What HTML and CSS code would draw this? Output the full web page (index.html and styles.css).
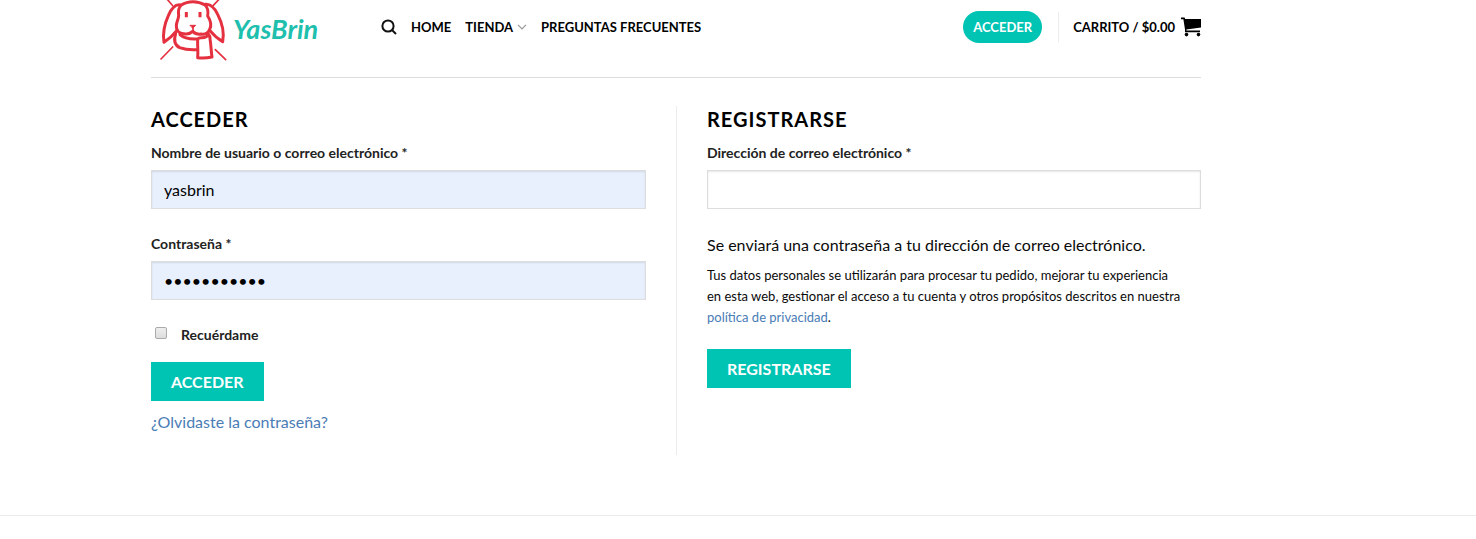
FILE: index.html
```
<!DOCTYPE html>
<html lang="es">
<head>
  <meta charset="UTF-8">
  <meta name="viewport" content="width=device-width, initial-scale=1.0">
  <title>Mi cuenta - YasBrin</title>
  <link rel="stylesheet" href="styles.css">
</head>
<body>
  <!-- Header -->
  <header class="site-header container">
    <a href="#" class="logo" aria-label="YasBrin">
      <svg class="logo-rabbit" viewBox="39 0 210 186" fill="none" stroke="#e5303f" stroke-width="9" stroke-linecap="round" stroke-linejoin="round">
        <path d="M66 -3L82 16M223 -3L205 16M48 177L83 141M242 179L211 149" stroke-width="5"/>
        <path d="M109 15Q124 5 144 5T180 15C190 24 190 36 188 48C196 60 200 76 194 88C189 100 178 104 168 102C157 104 148 99 143 94C136 101 127 103 117 101C101 101 93 91 94 76C95 64 100 59 101 47C99 34 99 24 109 15Z"/>
        <path d="M107 15C91 12 78 28 70 47C59 71 52 96 57 127Q80 111 96 91"/>
        <path d="M180 13C198 11 210 26 218 43C231 68 239 95 233 125Q212 113 195 92"/>
        <path d="M92 101C86 120 90 136 104 143Q126 151 157 149M105 104Q121 119 157 117M188 102Q196 107 195 116C198 132 198 152 201 171Q180 175 158 173C160 154 157 137 158 121Q158 112 171 113Q186 113 191 103"/>
        <path d="M124 36V52M165 36V52" stroke-linecap="butt"/>
        <path d="M136 76H152L144 84Z" fill="#e5303f" stroke-width="3"/>
        <path d="M144 83V94" stroke-width="5"/>
      </svg>
      <span class="logo-text">YasBrin</span>
    </a>

    <nav class="main-nav">
      <a href="#" class="search-link" aria-label="Buscar">
        <svg width="16" height="16" viewBox="0 0 16 16" fill="none" stroke="#111" stroke-width="2">
          <circle cx="7" cy="7" r="5.6"/>
          <path d="M11 11L15 15"/>
        </svg>
      </a>
      <a href="#">Home</a>
      <a href="#">Tienda
        <svg class="chevron" width="10" height="6" viewBox="0 0 10 6" fill="none" stroke="#999" stroke-width="1.2">
          <path d="M1 .8L5 5L9 .8"/>
        </svg>
      </a>
      <a href="#">Preguntas frecuentes</a>
    </nav>

    <div class="header-right">
      <a href="#" class="account-link">Acceder</a>
      <a href="#" class="cart-link">Carrito / $0.00
        <svg width="20" height="20" viewBox="0 0 20 20" fill="#000">
          <path d="M0 .5H3.6L4.2 2H20V10.5L5.4 12.5V13.6H19V15.2H4V12.5L2.4 2.2H0Z"/>
          <circle cx="5.5" cy="17.6" r="1.8"/>
          <circle cx="17.5" cy="17.6" r="1.8"/>
        </svg>
      </a>
    </div>
  </header>

  <!-- Account forms -->
  <main class="account container">
    <section class="col login">
      <h3>Acceder</h3>
      <form>
        <div class="form-row">
          <label for="username">Nombre de usuario o correo electrónico *</label>
          <input type="text" id="username" class="filled" value="yasbrin">
        </div>
        <div class="form-row">
          <label for="password">Contraseña *</label>
          <input type="password" id="password" class="filled" value="yasbrin2019">
        </div>
        <div class="remember">
          <input type="checkbox" id="rememberme">
          <label for="rememberme">Recuérdame</label>
        </div>
        <button type="submit">Acceder</button>
        <p class="lost-password"><a href="#">¿Olvidaste la contraseña?</a></p>
      </form>
    </section>

    <section class="col register">
      <h3>Registrarse</h3>
      <form>
        <div class="form-row">
          <label for="reg_email">Dirección de correo electrónico *</label>
          <input type="email" id="reg_email">
        </div>
        <p class="notice">Se enviará una contraseña a tu dirección de correo electrónico.</p>
        <p class="privacy">Tus datos personales se utilizarán para procesar tu pedido, mejorar tu experiencia en esta web, gestionar el acceso a tu cuenta y otros propósitos descritos en nuestra <a href="#">política de privacidad</a>.</p>
        <button type="submit">Registrarse</button>
      </form>
    </section>
  </main>

  <footer class="site-footer"></footer>
</body>
</html>
```

FILE: styles.css
```
:root {
  --primary-color: #00c4b3;
  --link-color: #4a7cb5;
  --text-color: #0a0a0a;
  --label-color: #222;
  --border-color: #ececec;
  --input-border: #ddd;
}

* {
  box-sizing: border-box;
  margin: 0;
  padding: 0;
}

body {
  font-family: Lato, sans-serif;
  font-size: 16px;
  line-height: 26px;
  color: var(--text-color);
  background-color: #fff;
}

a {
  color: var(--link-color);
  text-decoration: none;
}

.container {
  max-width: 1050px;
  margin-left: 151px;
  margin-right: 24px;
}

/* Header */
.site-header {
  display: flex;
  align-items: flex-start;
  padding-bottom: 15px;
  border-bottom: 1px solid #ddd;
}

.logo {
  display: flex;
  width: 230px;
  padding-left: 7px;
}

.logo-rabbit {
  width: 70px;
  height: 62px;
}

.logo-text {
  font-family: 'Brush Script MT', Lato, cursive;
  font-size: 27px;
  font-style: italic;
  font-weight: 700;
  line-height: 58px;
  padding-left: 5px;
  color: #1fbfae;
}

.main-nav,
.header-right {
  display: flex;
  align-items: center;
  height: 54px;
  font-size: 13px;
  font-weight: 700;
  text-transform: uppercase;
  white-space: nowrap;
}

.main-nav {
  gap: 14px;
}

.main-nav a,
.cart-link {
  display: flex;
  align-items: center;
  color: #000;
}

.chevron {
  margin-left: 4px;
}

.header-right {
  margin-left: auto;
  gap: 16px;
}

.account-link {
  padding: 0 10px;
  line-height: 32px;
  border-radius: 16px;
  color: #fff;
  background-color: var(--primary-color);
}

.cart-link {
  height: 30px;
  padding-left: 14px;
  gap: 6px;
  border-left: 1px solid var(--border-color);
}

/* Forms */
.account {
  display: grid;
  grid-template-columns: 1fr 1fr;
  padding-top: 28px;
  padding-bottom: 60px;
}

.login {
  padding-right: 30px;
  padding-bottom: 20px;
}

.register {
  padding-left: 30px;
  border-left: 1px solid var(--border-color);
}

h3 {
  font-size: 20px;
  line-height: 26px;
  letter-spacing: 1px;
  text-transform: uppercase;
  color: #000;
  margin-bottom: 10px;
}

label {
  display: block;
  font-size: 14px;
  font-weight: 700;
  line-height: 22px;
  color: var(--label-color);
}

.form-row {
  margin-bottom: 24px;
}

.form-row label {
  margin-bottom: 6px;
}

.form-row input {
  display: block;
  width: 100%;
  height: 39px;
  padding: 0 12px;
  font-family: inherit;
  font-size: 16px;
  color: #000;
  background-color: #fff;
  border: 1px solid var(--input-border);
  box-shadow: inset 0 1px 2px rgba(0, 0, 0, 0.1);
}

.form-row .filled {
  background-color: #e8f0fe;
}

.remember {
  display: flex;
  align-items: center;
  gap: 14px;
  padding-left: 4px;
  margin-bottom: 16px;
}

.remember input {
  appearance: none;
  width: 12px;
  height: 12px;
  margin-bottom: 4px;
  background: linear-gradient(#eee, #ddd);
  border: 1px solid #aaa;
  border-radius: 2px;
}

button {
  display: block;
  height: 39px;
  padding: 0 20px;
  font-family: inherit;
  font-size: 16px;
  font-weight: 700;
  text-transform: uppercase;
  color: #fff;
  background-color: var(--primary-color);
  border: none;
  cursor: pointer;
}

.lost-password {
  margin-top: 8px;
}

.notice {
  line-height: 24px;
  margin-bottom: 8px;
}

.privacy {
  font-size: 13px;
  line-height: 21px;
  padding-right: 18px;
  margin-bottom: 21px;
}

/* Footer */
.site-footer {
  min-height: 20px;
  border-top: 1px solid var(--border-color);
}

@media (max-width: 850px) {
  .container {
    margin-left: 16px;
    margin-right: 16px;
  }

  .site-header {
    flex-wrap: wrap;
  }

  .account {
    grid-template-columns: 1fr;
  }

  .login {
    padding-right: 0;
  }

  .register {
    padding-left: 0;
    border-left: none;
  }
}
```
